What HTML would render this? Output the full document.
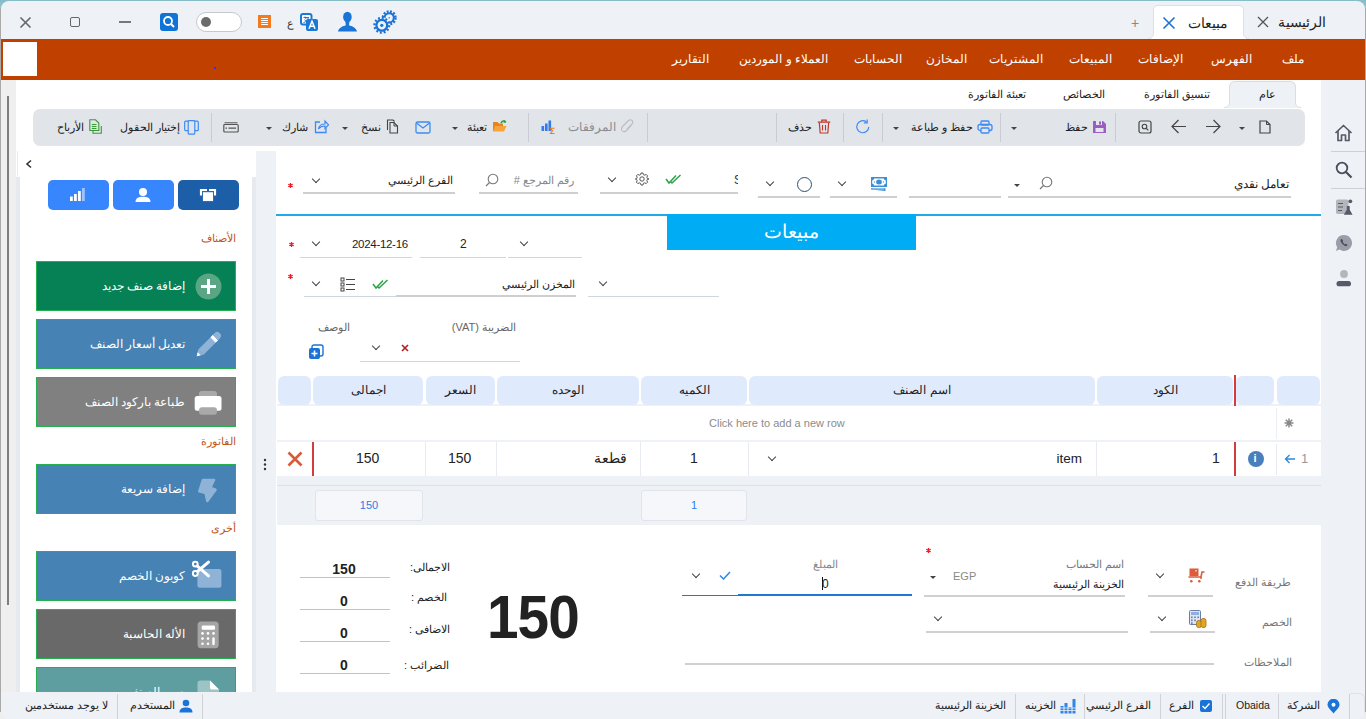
<!DOCTYPE html>
<html><head><meta charset="utf-8">
<style>
*{box-sizing:border-box;margin:0;padding:0}
html,body{width:1366px;height:719px;overflow:hidden;background:linear-gradient(#86bcc6 0,#9fd0da 20px,#eeeeee 21px);font-family:"Liberation Sans",sans-serif;font-size:12px;color:#222}
.a{position:absolute}
#win{position:absolute;left:1px;top:1px;width:1364px;height:718px;background:#eef1f6;border-radius:8px;overflow:hidden}
.t{position:absolute;white-space:nowrap;direction:rtl;line-height:1}
.tl{position:absolute;white-space:nowrap;line-height:1}
.menu{color:#fff;font-size:12px;top:53px}
.sep{position:absolute;width:1px;background:#c9cdd3}
.ul{position:absolute;height:1px;background:#c8c8c8}
.chev{position:absolute;width:6px;height:6px;border-right:1.3px solid #444;border-bottom:1.3px solid #444;transform:rotate(45deg)}
.tri{position:absolute;width:0;height:0;border-left:3.5px solid transparent;border-right:3.5px solid transparent;border-top:3.5px solid #444;margin-left:0.5px;margin-top:0.5px}
.hd{position:absolute;top:376px;height:29px;background:#dfebfd;border-radius:6px;font-size:12px;color:#222;text-align:center;line-height:29px;direction:rtl}
.btn{position:absolute;left:36px;width:200px;height:50px;border:1px solid #25b04f;color:#fff;font-size:11.5px}
.btn .t{right:50px;top:19px;color:#fff}
.lbl{position:absolute;right:1130px;color:#c0561a;font-size:11px;direction:rtl}
.stt{position:absolute;top:700px;font-size:10.5px;color:#222;direction:rtl;white-space:nowrap;line-height:1}
.ssep{position:absolute;top:694px;width:1px;height:25px;background:#cfd3d8}
</style></head><body>
<div class="a" style="left:0;top:8px;width:1px;height:704px;background:#a9a9a9"></div>
<div class="a" style="left:1365px;top:8px;width:1px;height:704px;background:#a9a9a9"></div>
<div id="win">
<!-- ===== TITLE BAR (coords are page coords minus 1) ===== -->
<div class="a" style="left:-1px;top:-1px;width:1366px;height:719px">
  <!-- window controls -->
  <svg class="a" style="left:19px;top:16px" width="13" height="13" viewBox="0 0 13 13"><path d="M1.5 1.5L11.5 11.5M11.5 1.5L1.5 11.5" stroke="#666" stroke-width="1.6"/></svg>
  <div class="a" style="left:70px;top:17px;width:10px;height:10px;border:1.4px solid #666;border-radius:2px"></div>
  <div class="a" style="left:119px;top:21px;width:12px;height:1.5px;background:#777"></div>
  <div class="a" style="left:160px;top:13px;width:18px;height:18px;background:#0f73d8;border-radius:3px"></div>
  <svg class="a" style="left:160px;top:13px" width="18" height="18" viewBox="0 0 18 18"><circle cx="8" cy="8" r="4" stroke="#fff" stroke-width="1.8" fill="none"/><path d="M11 11L14 14" stroke="#fff" stroke-width="2"/></svg>
  <div class="a" style="left:196px;top:12px;width:46px;height:20px;background:#fff;border:1px solid #c5c8cc;border-radius:10px"></div>
  <div class="a" style="left:201px;top:17px;width:10px;height:10px;background:#6b6b6b;border-radius:50%"></div>
  <div class="a" style="left:258px;top:15px;width:13px;height:13px;background:#f47a1f"></div>
  <svg class="a" style="left:258px;top:15px" width="13" height="13"><path d="M3 3.5H10M3 5.5H10M3 7.5H10M3 9.5H10" stroke="#fff" stroke-width="1"/></svg>
  <div class="t" style="left:287px;top:18px;font-size:11px;color:#333">ع</div>
  <svg class="a" style="left:300px;top:13px" width="19" height="19" viewBox="0 0 19 19"><rect x="1" y="1" width="10.5" height="10.5" rx="2" fill="#fff" stroke="#1a78d8" stroke-width="2"/><path d="M3.5 4.5H9M5 3.5L6 6M8.5 4.5C7.5 7.5 6 9 3.5 9.5M4.5 6.5C5.5 8 7 9 9 9.5" fill="none" stroke="#1a78d8" stroke-width="1"/><rect x="6" y="6" width="12" height="12" rx="2" fill="#1a78d8"/><path d="M9 15.8L12 8.3L15 15.8M10.1 13.2H13.9" fill="none" stroke="#fff" stroke-width="1.5"/></svg>
  <svg class="a" style="left:337px;top:11px" width="21" height="21" viewBox="0 0 21 21"><ellipse cx="10.4" cy="6" rx="4.3" ry="5.3" fill="#1a73d6"/><path d="M8.3 10H12.5L12 14.2C15 15.2 19 16.2 20 20.5H1C2 16.2 6 15.2 8.8 14.2Z" fill="#1a73d6"/></svg>
  <svg class="a" style="left:372px;top:9px" width="26" height="26" viewBox="0 0 26 26">
    <g fill="none" stroke="#1a73d6"><circle cx="17.2" cy="8.8" r="6.3" stroke-width="2.4" stroke-dasharray="1.9 1.4"/><circle cx="17.2" cy="8.8" r="4.6" stroke-width="2"/></g>
    <circle cx="9.8" cy="16.3" r="8" fill="#eef1f6"/>
    <g fill="none" stroke="#1a73d6"><circle cx="9.8" cy="16.3" r="7.3" stroke-width="2.4" stroke-dasharray="1.9 1.9"/><circle cx="9.8" cy="16.3" r="5.4" stroke-width="2.3"/></g>
    <circle cx="9.8" cy="16.3" r="1.6" fill="#1a73d6"/><rect x="16.5" y="8" width="1.5" height="1.5" fill="#5a9ae6"/>
  </svg>
  <!-- tabs -->
  <div class="t" style="left:1131px;top:16px;font-size:14px;color:#888">+</div>
  <div class="a" style="left:1153px;top:5px;width:91px;height:34px;background:#fff;border:1px solid #dde0e4;border-bottom:none;border-radius:5px 5px 0 0"></div>
  <svg class="a" style="left:1148px;top:33px" width="101" height="6" viewBox="0 0 101 6"><path d="M0 6C3 6 5.5 4 5.5 0H95.5C95.5 4 98 6 101 6Z" fill="#fff"/><path d="M0 5.5C3 5.5 5.5 4 5.5 0M95.5 0C95.5 4 98 5.5 101 5.5" fill="none" stroke="#dde0e4" stroke-width="1"/></svg>
  <svg class="a" style="left:1162px;top:16px" width="14" height="14"><path d="M1.5 1.5L12.5 12.5M12.5 1.5L1.5 12.5" stroke="#1a73d6" stroke-width="1.6"/></svg>
  <div class="t" style="right:138px;top:16px;font-size:14px;color:#222">مبيعات</div>
  <svg class="a" style="left:1257px;top:16px" width="12" height="12"><path d="M1 1L11 11M11 1L1 11" stroke="#555" stroke-width="1.3"/></svg>
  <div class="t" style="right:40px;top:16px;font-size:13.5px;color:#222">الرئيسية</div>

  <!-- menu bar -->
  <div class="a" style="left:0;top:39px;width:1366px;height:41px;background:#c04000"></div>
  <div class="a" style="left:3px;top:42px;width:34px;height:34px;background:#fff"></div>
  <div class="a" style="left:214px;top:67px;width:2px;height:2px;background:#2a3fd0"></div>
  <div class="t menu" style="right:62px">ملف</div>
  <div class="t menu" style="right:114px">الفهرس</div>
  <div class="t menu" style="right:183px">الإضافات</div>
  <div class="t menu" style="right:254px">المبيعات</div>
  <div class="t menu" style="right:323px">المشتريات</div>
  <div class="t menu" style="right:399px">المخازن</div>
  <div class="t menu" style="right:464px">الحسابات</div>
  <div class="t menu" style="right:538px">العملاء و الموردين</div>
  <div class="t menu" style="right:657px">التقارير</div>


  <!-- content bg -->
  <div class="a" style="left:0;top:80px;width:16px;height:612px;background:#efefef"></div>
  <div class="a" style="left:7px;top:96px;width:2px;height:509px;background:#7d7d7d"></div>
  <div class="a" style="left:16px;top:80px;width:1305px;height:612px;background:#fff"></div>
  <div class="a" style="left:1321px;top:115px;width:44px;height:577px;background:#eef1f6"></div>
  
  <!-- sub tabs -->
  <div class="a" style="left:1229px;top:81px;width:67px;height:27px;background:#eef1f6;border:1px solid #d9dde3;border-bottom:none;border-radius:6px 6px 0 0"></div>
  <svg class="a" style="left:1224px;top:102px" width="77" height="6" viewBox="0 0 77 6"><path d="M0 6C3 6 5.5 4 5.5 0H71.5C71.5 4 74 6 77 6Z" fill="#eef1f6"/><path d="M0 5.5C3 5.5 5.5 4 5.5 0M71.5 0C71.5 4 74 5.5 77 5.5" fill="none" stroke="#d9dde3" stroke-width="1"/></svg>
  <div class="t" style="right:90px;top:89px;font-size:11px">عام</div>
  <div class="t" style="right:156px;top:89px;font-size:11px">تنسيق الفاتورة</div>
  <div class="t" style="right:261px;top:89px;font-size:11px">الخصائص</div>
  <div class="t" style="right:340px;top:89px;font-size:11px">تعبئة الفاتورة</div>

  <!-- toolbar -->
  <div class="a" style="left:33px;top:109px;width:1272px;height:37px;background:#e1e4e9;border-radius:7px"></div>
  <div class="sep" style="left:211px;top:113px;height:29px"></div>
  <div class="sep" style="left:528px;top:113px;height:29px"></div>
  <div class="sep" style="left:647px;top:113px;height:29px"></div>
  <div class="sep" style="left:776px;top:113px;height:29px"></div>
  <div class="sep" style="left:843px;top:113px;height:29px"></div>
  <div class="sep" style="left:882px;top:113px;height:29px"></div>
  <div class="sep" style="left:1000px;top:113px;height:29px"></div>
  <div class="sep" style="left:1115px;top:113px;height:29px"></div>


  <!-- toolbar items -->
  <svg class="a" style="left:1259px;top:120px" width="12" height="14" viewBox="0 0 12 14"><path d="M1 1H7.5L11 4.5V13H1Z" fill="none" stroke="#444" stroke-width="1.2"/><path d="M7.5 1V4.5H11" fill="none" stroke="#444" stroke-width="1"/></svg>
  <div class="tri" style="left:1238px;top:126px"></div>
  <svg class="a" style="left:1205px;top:119px" width="16" height="15" viewBox="0 0 16 15"><path d="M1 7.5H15M8.5 1L15 7.5L8.5 14" fill="none" stroke="#444" stroke-width="1.2"/></svg>
  <svg class="a" style="left:1171px;top:119px" width="16" height="15" viewBox="0 0 16 15"><path d="M15 7.5H1M7.5 1L1 7.5L7.5 14" fill="none" stroke="#444" stroke-width="1.2"/></svg>
  <svg class="a" style="left:1138px;top:120px" width="14" height="14" viewBox="0 0 14 14"><rect x="1" y="1" width="12" height="12" rx="2" fill="none" stroke="#444" stroke-width="1.2"/><circle cx="6.5" cy="6.5" r="2.3" fill="none" stroke="#444" stroke-width="1.1"/><path d="M8.3 8.3L10.3 10.3" stroke="#444" stroke-width="1.2"/></svg>
  <svg class="a" style="left:1092px;top:120px" width="15" height="14" viewBox="0 0 15 14"><path d="M1 1H11L14 4V13H1Z" fill="#9b5cc4"/><rect x="4" y="1" width="6" height="4" fill="#e3e6ea"/><rect x="7" y="1.5" width="2" height="3" fill="#9b5cc4"/><rect x="3.5" y="8" width="8" height="4" fill="#e3e6ea"/></svg>
  <div class="t" style="right:278px;top:122px;font-size:11px">حفظ</div>
  <div class="tri" style="left:1010px;top:126px"></div>
  <svg class="a" style="left:977px;top:120px" width="16" height="14" viewBox="0 0 16 14"><rect x="4" y="1" width="8" height="4" rx="1" fill="none" stroke="#3d8bf2" stroke-width="1.3"/><rect x="1" y="4.5" width="14" height="6" rx="2" fill="none" stroke="#3d8bf2" stroke-width="1.3"/><rect x="4" y="8" width="8" height="5" rx="1" fill="#e3e6ea" stroke="#3d8bf2" stroke-width="1.3"/></svg>
  <div class="t" style="right:393px;top:122px;font-size:11px">حفظ و طباعة</div>
  <div class="tri" style="left:892px;top:126px"></div>
  <svg class="a" style="left:855px;top:119px" width="16" height="15" viewBox="0 0 16 15"><path d="M13.8 8A6 6 0 1 1 11.5 3" fill="none" stroke="#3d8bf2" stroke-width="1.2"/><path d="M12.2 0.5V3.8H8.8" fill="none" stroke="#3d8bf2" stroke-width="1.2"/></svg>
  <svg class="a" style="left:817px;top:119px" width="14" height="15" viewBox="0 0 14 15"><path d="M0.8 3.2H13.2M4.8 3V1.2H9.2V3" fill="none" stroke="#c0392b" stroke-width="1.2"/><path d="M2.3 3.5L3.2 14H10.8L11.7 3.5" fill="none" stroke="#c0392b" stroke-width="1.2"/><path d="M5.5 6V11.5M8.5 6V11.5" stroke="#c0392b" stroke-width="1.1"/></svg>
  <div class="t" style="right:554px;top:122px;font-size:11px">حذف</div>
  <svg class="a" style="left:621px;top:119px" width="13" height="15" viewBox="0 0 13 15"><path d="M10.5 6L5.5 11.5C4 13 1.8 13 1 11.5C0 10 0.5 8.5 2 7L7.5 1.5C8.5 0.5 10.2 0.5 11 1.5C12 2.5 11.8 4 11 5L5.8 10.3" fill="none" stroke="#b9bcc1" stroke-width="1.1"/></svg>
  <div class="t" style="right:750px;top:121px;font-size:12px;color:#8a8d92">المرفقات</div>
  <svg class="a" style="left:541px;top:120px" width="14" height="14" viewBox="0 0 14 14"><rect x="0.5" y="6" width="2.6" height="5" fill="#2f7cf0"/><rect x="4" y="3.5" width="2.6" height="7.5" fill="#2f7cf0"/><rect x="7.5" y="0.5" width="2.6" height="10.5" fill="#2f7cf0"/><path d="M13.5 8.2H9.5L11.5 10.8L9.5 13.5H13.5" fill="none" stroke="#f07a20" stroke-width="1.1"/></svg>
  <svg class="a" style="left:492px;top:119px" width="15" height="14" viewBox="0 0 15 14"><path d="M1 3H5.5L7 4.5H11V12H1Z" fill="#e8841d"/><path d="M3 7H14.5L12 12.5H1Z" fill="#f8a23b"/><path d="M9 4C10 1.5 12.5 1.5 13.8 3" fill="none" stroke="#2e9e3e" stroke-width="1.5"/><path d="M12 0.8L14.3 3.2L11.6 4.1" fill="#2e9e3e"/></svg>
  <div class="t" style="right:879px;top:122px;font-size:11px">تعبئة</div>
  <div class="tri" style="left:451px;top:126px"></div>
  <svg class="a" style="left:415px;top:121px" width="16" height="13" viewBox="0 0 16 13"><rect x="1" y="1" width="14" height="11" rx="1.5" fill="none" stroke="#3d8bf2" stroke-width="1.3"/><path d="M1.5 2L8 7L14.5 2" fill="none" stroke="#3d8bf2" stroke-width="1.3"/></svg>
  <svg class="a" style="left:386px;top:119px" width="13" height="15" viewBox="0 0 13 15"><path d="M4 3.5H8L11.5 7V14H4Z" fill="#e3e6ea" stroke="#444" stroke-width="1.1"/><path d="M1.5 11V1H7L8.5 2.5" fill="none" stroke="#444" stroke-width="1.1"/><path d="M8 3.5V7H11.5" fill="none" stroke="#444" stroke-width="1"/></svg>
  <div class="t" style="right:985px;top:122px;font-size:11px">نسخ</div>
  <div class="tri" style="left:341px;top:126px"></div>
  <svg class="a" style="left:314px;top:119px" width="15" height="15" viewBox="0 0 15 15"><path d="M6 3H1.5V13.5H12V9" fill="none" stroke="#3d8bf2" stroke-width="1.3"/><path d="M4.5 10C5 6.5 7.5 5 11 5V2L14.5 5.8L11 9.5V7C8 7 6 8 4.5 10Z" fill="none" stroke="#3d8bf2" stroke-width="1.2"/></svg>
  <div class="t" style="right:1058px;top:122px;font-size:11px">شارك</div>
  <div class="tri" style="left:265px;top:126px"></div>
  <svg class="a" style="left:223px;top:122px" width="16" height="11" viewBox="0 0 16 11"><path d="M1.5 0.8H14.5" stroke="#555" stroke-width="1"/><rect x="0.8" y="2.5" width="14.4" height="7.5" rx="1" fill="none" stroke="#555" stroke-width="1.2"/><path d="M2.5 6.2H4M5.5 6.2H13" stroke="#555" stroke-width="1.2"/></svg>
  <svg class="a" style="left:184px;top:120px" width="15" height="15" viewBox="0 0 15 15"><rect x="0.7" y="1.2" width="13.6" height="9.5" rx="1" fill="none" stroke="#3d8bf2" stroke-width="1.2"/><rect x="4.2" y="0.6" width="6.6" height="13.6" rx="1" fill="#e1e4e9" stroke="#3d8bf2" stroke-width="1.2"/></svg>
  <div class="t" style="right:1186px;top:122px;font-size:11px">إختيار الحقول</div>
  <svg class="a" style="left:89px;top:119px" width="13" height="15" viewBox="0 0 13 15"><path d="M4 4V14.3H12.3V7" fill="none" stroke="#3a9a3a" stroke-width="1.1"/><path d="M0.8 11.5V0.8H6.5L9.8 4V11.5Z" fill="#e1e4e9" stroke="#3a9a3a" stroke-width="1.1"/><path d="M2.8 5.5H7.5M2.8 7.5H7.5M2.8 9.5H7.5" stroke="#3a9a3a" stroke-width="1"/></svg>
  <div class="t" style="right:1282px;top:122px;font-size:11px">الأرباح</div>

  <!-- right sidebar icons -->
  <svg class="a" style="left:1334px;top:124px" width="19" height="18" viewBox="0 0 19 18"><path d="M1.5 9L9.5 1.5L17.5 9M4 7V16.5H7.5V11H11.5V16.5H15V7" fill="none" stroke="#555a66" stroke-width="1.7" stroke-linejoin="round"/></svg>
  <div class="a" style="left:1331px;top:151px;width:34px;height:1px;background:#cdd1d7"></div>
  <svg class="a" style="left:1335px;top:161px" width="18" height="18" viewBox="0 0 18 18"><circle cx="7" cy="7" r="5.3" fill="none" stroke="#4a4e5a" stroke-width="1.8"/><path d="M11 11L16.5 16.5" stroke="#4a4e5a" stroke-width="2.2"/></svg>
  <div class="a" style="left:1331px;top:188px;width:34px;height:1px;background:#cdd1d7"></div>
  <svg class="a" style="left:1335px;top:199px" width="18" height="17" viewBox="0 0 18 17"><rect x="1" y="0.6" width="12.5" height="14.4" rx="1.8" fill="#b4b6bd"/><path d="M3 4.5H8M3 8H8M3 11.5H7" stroke="#555a66" stroke-width="1.2"/><path d="M8.8 15.8L11.8 10.8V7H14.7V10.8L17.6 15.8Z" fill="#555a66"/><circle cx="15.3" cy="2.3" r="1.9" fill="#555a66"/></svg>
  <svg class="a" style="left:1335px;top:234px" width="18" height="18" viewBox="0 0 18 18"><path d="M9 1A8 8 0 1 1 4.5 15.6L1 17L2.2 13.3A8 8 0 0 1 9 1Z" fill="#9a9ea8"/><path d="M6 5.2C5.2 5.8 5.3 7.3 6.8 9.3C8.5 11.4 10.3 12.5 11.6 12.1C12.2 11.9 12.6 11.2 12.3 10.8L11 9.8C10.6 9.6 10.2 10.3 9.9 10.3C9.2 10 7.9 8.6 7.7 8C7.7 7.7 8.3 7.3 8.2 6.9L7.3 5.5C7 5.1 6.4 5 6 5.2Z" fill="#4a4e5a"/></svg>
  <svg class="a" style="left:1334px;top:268px" width="20" height="20" viewBox="0 0 20 20"><circle cx="10" cy="6" r="3.9" fill="#b4b6bd"/><rect x="2.5" y="13" width="14.5" height="5.3" rx="2.6" fill="#555a66"/></svg>

  <!-- left panel -->
  <div class="a" style="left:16px;top:177px;width:4px;height:515px;background:#e6e9ee"></div>
  <div class="a" style="left:252px;top:177px;width:4px;height:515px;background:#e6e9ee"></div>
  <div class="a" style="left:256px;top:151px;width:20px;height:541px;background:#eef1f6"></div>
  <div class="a" style="left:17px;top:151px;width:1px;height:26px;background:#e3ecfa"></div>
  <svg class="a" style="left:25px;top:159px" width="8" height="10" viewBox="0 0 8 10"><path d="M6 1.5L2 5L6 8.5" fill="none" stroke="#333" stroke-width="1.6"/></svg>
  <div class="a" style="left:48px;top:180px;width:61px;height:30px;background:#3786fe;border-radius:5px"></div>
  <div class="a" style="left:113px;top:180px;width:61px;height:30px;background:#3786fe;border-radius:5px"></div>
  <div class="a" style="left:178px;top:180px;width:61px;height:30px;background:#1d5ea8;border-radius:5px"></div>
  <svg class="a" style="left:69px;top:187px" width="16" height="16" viewBox="0 0 16 16"><rect x="1" y="9.5" width="2.8" height="4.5" fill="#fff"/><rect x="5" y="7" width="2.8" height="7" fill="#fff"/><rect x="9" y="4" width="2.8" height="10" fill="#fff"/><rect x="13" y="1" width="2.8" height="13" fill="#9fc3fb"/></svg>
  <svg class="a" style="left:134px;top:187px" width="18" height="17" viewBox="0 0 18 17"><circle cx="9" cy="5" r="4" fill="#fff"/><path d="M1.5 15C1.5 11 5 9.8 9 9.8C13 9.8 16.5 11 16.5 15Z" fill="#fff"/></svg>
  <svg class="a" style="left:199px;top:188px" width="18" height="14" viewBox="0 0 18 14"><path d="M2 7.5V2H8M10 2H16V7.5" fill="none" stroke="#fff" stroke-width="2.2"/><rect x="3.6" y="3.8" width="10.8" height="9.6" fill="#fff" stroke="#1d5ea8" stroke-width="0.8"/></svg>

  <div class="t lbl" style="top:233px">الأصناف</div>
  <div class="btn" style="top:261px;background:#058155"><div class="t">إضافة صنف جديد</div>
    <svg class="a" style="left:158px;top:11px" width="27" height="27" viewBox="0 0 27 27"><circle cx="13.5" cy="13.5" r="13" fill="#5aa583"/><path d="M13.5 6V21M6 13.5H21" stroke="#fff" stroke-width="3"/></svg></div>
  <div class="btn" style="top:319px;background:#4682b4"><div class="t">تعديل أسعار الصنف</div>
    <svg class="a" style="left:157px;top:11px" width="28" height="28" viewBox="0 0 28 28"><g transform="rotate(-45 14 14)"><path d="M-2 14L4 10.25V17.75Z" fill="#8fb3d6"/><path d="M-2 14L1.5 11.9V16.1Z" fill="#fff"/><rect x="4" y="10.25" width="17" height="7.5" fill="#8fb3d6"/><rect x="21" y="10.25" width="3.6" height="7.5" fill="#fff"/><path d="M24.6 10.25H27A3.75 3.75 0 0 1 27 17.75H24.6Z" fill="#8fb3d6"/></g></svg></div>
  <div class="btn" style="top:377px;background:#808080"><div class="t">طباعة باركود الصنف</div>
    <svg class="a" style="left:157px;top:12px" width="28" height="26" viewBox="0 0 28 26"><rect x="4.9" y="0.9" width="18.1" height="8" rx="3" fill="#a9a9a9"/><rect x="0.7" y="6" width="26.8" height="14.7" rx="2.5" fill="#fff"/><rect x="5" y="17.2" width="18" height="7.5" rx="3" fill="#a9a9a9"/></svg></div>
  <div class="t lbl" style="top:436px">الفاتورة</div>
  <div class="btn" style="top:464px;background:#4682b4"><div class="t">إضافة سريعة</div>
    <svg class="a" style="left:158px;top:10px" width="26" height="32" viewBox="0 0 26 32"><path d="M8 5H19L15.3 12.8L20.5 14.8L12.3 26L10.6 18L4.3 16.3Z" fill="#8fb3d6" stroke="#8fb3d6" stroke-width="2.6" stroke-linejoin="round"/></svg></div>
  <div class="t lbl" style="top:523px">أخرى</div>
  <div class="btn" style="top:551px;background:#4682b4"><div class="t">كوبون الخصم</div>
    <svg class="a" style="left:153px;top:8px" width="34" height="30" viewBox="0 0 34 30"><rect x="7.4" y="9" width="24" height="18.8" rx="2.2" fill="#8fb3d6"/><path d="M6.8 5.6L18.5 15.8M6.8 12L18.5 2.2" stroke="#fff" stroke-width="3" stroke-linecap="round"/><circle cx="5.3" cy="4.1" r="2.4" fill="#4682b4" stroke="#fff" stroke-width="2"/><circle cx="5.3" cy="13.5" r="2.4" fill="#4682b4" stroke="#fff" stroke-width="2"/></svg></div>
  <div class="btn" style="top:609px;background:#696969"><div class="t">الأله الحاسبة</div>
    <svg class="a" style="left:160px;top:11px" width="23" height="28" viewBox="0 0 23 28"><rect x="0.6" y="0.4" width="21.1" height="26.8" rx="3.5" fill="#a5a5a5"/><rect x="4.7" y="4.6" width="13.3" height="4.2" rx="1.2" fill="#fff"/><g fill="#fff"><circle cx="5.5" cy="12.4" r="1.3"/><circle cx="11" cy="12.4" r="1.3"/><circle cx="16.5" cy="12.4" r="1.3"/><circle cx="5.5" cy="17.6" r="1.3"/><circle cx="11" cy="17.6" r="1.3"/><circle cx="5.5" cy="22.8" r="1.3"/><circle cx="11" cy="22.8" r="1.3"/><rect x="15.3" y="16.2" width="2.4" height="8" rx="1.2"/></g></svg></div>
  <div class="btn" style="top:667px;background:#5f9ea0;height:50px"><div class="t">صور الصنف</div>
    <svg class="a" style="left:160px;top:12px" width="23" height="30" viewBox="0 0 23 30"><path d="M3.5 0.5H13L22 9.5V30H0.5V3.5A3 3 0 0 1 3.5 0.5Z" fill="#9cc4c5"/><path d="M13 0.5L22 9.5H14.5A1.5 1.5 0 0 1 13 8Z" fill="#fff"/></svg></div>
  <svg class="a" style="left:263px;top:458px" width="4" height="13" viewBox="0 0 4 13"><circle cx="2" cy="2" r="1.2" fill="#333"/><circle cx="2" cy="6.5" r="1.2" fill="#333"/><circle cx="2" cy="11" r="1.2" fill="#333"/></svg>

  <!-- ===== MAIN FORM ===== -->
  <!-- row1 -->
  <svg class="a" style="left:287px;top:182px" width="7" height="7" viewBox="0 0 7 7"><path d="M3.5 1V6M1.3 2.2L5.7 4.8M5.7 2.2L1.3 4.8" stroke="#ee1c25" stroke-width="1.3"/></svg>
  <div class="chev" style="left:313px;top:176px"></div>
  <div class="ul" style="left:303px;top:192px;width:152px;height:2px;background:#cfcfcf"></div>
  <div class="t" style="right:913px;top:175px;font-size:11px">الفرع الرئيسي</div>
  <svg class="a" style="left:485px;top:173px" width="14" height="14" viewBox="0 0 14 14"><circle cx="8" cy="6" r="4.8" fill="none" stroke="#777" stroke-width="1.1"/><path d="M4.5 9.5L1 13" stroke="#777" stroke-width="1.2"/></svg>
  <div class="ul" style="left:479px;top:192px;width:99px;height:2px;background:#cfcfcf"></div>
  <div class="t" style="right:792px;top:175px;font-size:11px;color:#888">رقم المرجع #</div>
  <div class="chev" style="left:609px;top:175px"></div>
  <svg class="a" style="left:635px;top:172px" width="14" height="14" viewBox="0 0 14 14"><g fill="none" stroke="#555" stroke-width="1"><circle cx="7" cy="7" r="2.2"/><path d="M6 1H8L8.4 2.6L9.8 3.2L11.2 2.4L12.6 3.8L11.8 5.2L12.4 6.6L14 7V7L12.4 7.4L11.8 8.8L12.6 10.2L11.2 11.6L9.8 10.8L8.4 11.4L8 13H6L5.6 11.4L4.2 10.8L2.8 11.6L1.4 10.2L2.2 8.8L1.6 7.4L0.3 7L1.6 6.6L2.2 5.2L1.4 3.8L2.8 2.4L4.2 3.2L5.6 2.6Z"/></g></svg>
  <svg class="a" style="left:665px;top:174px" width="17" height="11" viewBox="0 0 17 11"><path d="M1 5L4 9L11 1.5M5.5 7.5L7 9L15.5 1" fill="none" stroke="#2ea34a" stroke-width="1.5"/></svg>
  <div class="ul" style="left:600px;top:192px;width:138px;height:2px;background:#cfcfcf"></div>
  <div class="tl" style="left:734px;top:174px;font-size:12px;color:#333;width:4px;overflow:hidden">S</div>
  <div class="chev" style="left:767px;top:179px"></div>
  <div class="a" style="left:796.5px;top:176.5px;width:15px;height:15px;border:1.5px solid #2d4e73;border-radius:50%"></div>
  <div class="ul" style="left:758px;top:196px;width:62px;height:2px;background:#cfcfcf"></div>
  <div class="chev" style="left:839px;top:179px"></div>
  <svg class="a" style="left:870px;top:176px" width="18" height="16" viewBox="0 0 18 16"><rect x="1" y="1" width="16" height="10" fill="#3b8fd6"/><path d="M4 2.5H14C14 3.8 14.8 4.3 15.8 4.3V7.7C14.8 7.7 14 8.3 14 9.5H4C4 8.3 3.2 7.7 2.2 7.7V4.3C3.2 4.3 4 3.8 4 2.5Z" fill="#fff"/><ellipse cx="9" cy="6" rx="2.9" ry="2.5" fill="#3b8fd6"/><path d="M4.5 5.3L5.3 6L4.5 6.7L3.7 6Z M13.5 5.3L14.3 6L13.5 6.7L12.7 6Z" fill="#3b8fd6"/><path d="M1 12.2H15.5V15L1 13.4Z" fill="#3b8fd6"/><path d="M3 13H14" stroke="#d6e8f7" stroke-width="0.6"/></svg>
  <div class="ul" style="left:830px;top:196px;width:67px;height:2px;background:#cfcfcf"></div>
  <div class="ul" style="left:909px;top:196px;width:92px;height:2px;background:#cfcfcf"></div>
  <div class="tri" style="left:1013px;top:183px"></div>
  <svg class="a" style="left:1039px;top:176px" width="14" height="14" viewBox="0 0 14 14"><circle cx="8" cy="6" r="4.8" fill="none" stroke="#777" stroke-width="1.1"/><path d="M4.5 9.5L1 13" stroke="#777" stroke-width="1.2"/></svg>
  <div class="ul" style="left:1008px;top:196px;width:283px;height:2px;background:#cfcfcf"></div>
  <div class="t" style="right:77px;top:179px;font-size:11.5px">تعامل نقدي</div>
  <!-- blue line + banner -->
  <div class="a" style="left:276px;top:214px;width:1045px;height:1.5px;background:#22a9e8"></div>
  <div class="a" style="left:667px;top:214px;width:249px;height:36px;background:#00adf5"></div>
  <div class="t" style="left:667px;width:248px;text-align:center;top:222px;font-size:19px;color:#fff">مبيعات</div>
  <!-- row2 -->
  <svg class="a" style="left:288px;top:241px" width="7" height="7" viewBox="0 0 7 7"><path d="M3.5 1V6M1.3 2.2L5.7 4.8M5.7 2.2L1.3 4.8" stroke="#ee1c25" stroke-width="1.3"/></svg>
  <div class="chev" style="left:313px;top:239px"></div>
  <div class="tl" style="left:352px;top:239px;font-size:11.5px;letter-spacing:-0.3px;color:#222">2024-12-16</div>
  <div class="ul" style="left:300px;top:257px;width:112px;background:#cfd6de"></div>
  <div class="tl" style="left:460px;top:238px;font-size:12px;color:#222">2</div>
  <div class="ul" style="left:420px;top:257px;width:86px;background:#cfd6de"></div>
  <div class="chev" style="left:521px;top:239px"></div>
  <div class="ul" style="left:508px;top:257px;width:74px;background:#cfd6de"></div>
  <!-- row3 -->
  <svg class="a" style="left:287px;top:273px" width="7" height="7" viewBox="0 0 7 7"><path d="M3.5 1V6M1.3 2.2L5.7 4.8M5.7 2.2L1.3 4.8" stroke="#ee1c25" stroke-width="1.3"/></svg>
  <div class="chev" style="left:313px;top:279px"></div>
  <svg class="a" style="left:340px;top:277px" width="16" height="15" viewBox="0 0 16 15"><g fill="none" stroke="#444" stroke-width="1"><rect x="1" y="1" width="3" height="3"/><rect x="1" y="6" width="3" height="3"/><rect x="1" y="11" width="3" height="3"/><path d="M6 2.5H15M6 7.5H15M6 12.5H15"/></g></svg>
  <svg class="a" style="left:372px;top:279px" width="17" height="11" viewBox="0 0 17 11"><path d="M1 5L4 9L11 1.5M5.5 7.5L7 9L15.5 1" fill="none" stroke="#2ea34a" stroke-width="1.5"/></svg>
  <div class="ul" style="left:304px;top:296px;width:92px;background:#cfd6de"></div>
  <div class="ul" style="left:396px;top:295px;width:180px;height:2px;background:#cfcfcf"></div>
  <div class="t" style="right:791px;top:279px;font-size:11px">المخزن الرئيسي</div>
  <div class="chev" style="left:600px;top:279px"></div>
  <div class="ul" style="left:588px;top:296px;width:131px;background:#cfd6de"></div>
  <!-- VAT row -->
  <div class="t" style="right:850px;top:322px;font-size:11px;color:#666">الضريبة (VAT)</div>
  <div class="t" style="right:1016px;top:322px;font-size:11px;color:#666">الوصف</div>
  <svg class="a" style="left:308px;top:344px" width="16" height="16" viewBox="0 0 16 16"><rect x="4" y="1" width="11" height="11" rx="2" fill="none" stroke="#1a73d6" stroke-width="1.4"/><rect x="1" y="4" width="11" height="11" rx="2" fill="#1a73d6"/><path d="M6.5 6.5V12.5M3.5 9.5H9.5" stroke="#fff" stroke-width="1.6"/></svg>
  <div class="chev" style="left:373px;top:343px"></div>
  <svg class="a" style="left:401px;top:344px" width="8" height="8" viewBox="0 0 8 8"><path d="M1 1L7 7M7 1L1 7" stroke="#b02020" stroke-width="1.6"/></svg>
  <div class="ul" style="left:360px;top:361px;width:160px;background:#cfd6de"></div>

  <!-- ===== GRID ===== -->
  <div class="a" style="left:277px;top:376px;width:1044px;height:30px;background:#fff"></div>
  <div class="a" style="left:277px;top:404px;width:1044px;height:2px;background:#eef1f6"></div>
  <div class="hd" style="left:278px;width:33px"></div>
  <div class="hd" style="left:313px;width:110px">اجمالى</div>
  <div class="hd" style="left:426px;width:69px">السعر</div>
  <div class="hd" style="left:497px;width:142px">الوحده</div>
  <div class="hd" style="left:641px;width:106px">الكميه</div>
  <div class="hd" style="left:749px;width:346px">اسم الصنف</div>
  <div class="hd" style="left:1097px;width:136px">الكود</div>
  <div class="hd" style="left:1236px;width:38px"></div>
  <div class="hd" style="left:1277px;width:43px"></div>
  <div class="a" style="left:1234px;top:375px;width:2px;height:31px;background:#d23c3c"></div>
  <!-- new row -->
  <div class="tl" style="left:709px;top:418px;font-size:11px;color:#8c8c8c">Click here to add a new row</div>
  <div class="a" style="left:1276px;top:408px;width:1px;height:31px;background:#eceff3"></div>
  <svg class="a" style="left:1284px;top:418px" width="10" height="10" viewBox="0 0 10 10"><path d="M5 0.5V9.5M0.5 5H9.5M1.8 1.8L8.2 8.2M8.2 1.8L1.8 8.2" stroke="#888" stroke-width="1.5"/></svg>
  <div class="a" style="left:277px;top:440px;width:1044px;height:2px;background:#eef1f6"></div>
  <!-- data row -->
  <div class="a" style="left:277px;top:476px;width:1044px;height:10px;background:#eef1f6"></div>
  <div class="a" style="left:277px;top:485px;width:1044px;height:1px;background:#dde1e6"></div>
  <div class="a" style="left:425px;top:442px;width:1px;height:34px;background:#e8ebef"></div>
  <div class="a" style="left:496px;top:442px;width:1px;height:34px;background:#e8ebef"></div>
  <div class="a" style="left:640px;top:442px;width:1px;height:34px;background:#e8ebef"></div>
  <div class="a" style="left:748px;top:442px;width:1px;height:34px;background:#e8ebef"></div>
  <div class="a" style="left:1096px;top:442px;width:1px;height:34px;background:#e8ebef"></div>
  <div class="a" style="left:1276px;top:444px;width:1px;height:31px;background:#e8ebef"></div>
  <div class="a" style="left:312px;top:442px;width:2px;height:34px;background:#d23c3c"></div>
  <div class="a" style="left:1234px;top:442px;width:2px;height:34px;background:#d23c3c"></div>
  <svg class="a" style="left:287px;top:451px" width="16" height="16" viewBox="0 0 16 16"><path d="M1.5 1.5L14.5 14.5M14.5 1.5L1.5 14.5" stroke="#d95a36" stroke-width="2.6"/></svg>
  <div class="tl" style="left:356px;top:451px;font-size:14px;color:#222">150</div>
  <div class="tl" style="left:448px;top:451px;font-size:14px;color:#222">150</div>
  <div class="t" style="right:739px;top:451px;font-size:14px;color:#222">قطعة</div>
  <div class="tl" style="left:690px;top:451px;font-size:14px;color:#222">1</div>
  <div class="chev" style="left:769px;top:454px;width:6px;height:6px;border-width:1px"></div>
  <div class="tl" style="right:284px;top:452px;font-size:13.5px;color:#222">item</div>
  <div class="tl" style="left:1212px;top:451px;font-size:14px;color:#222">1</div>
  <div class="a" style="left:1248px;top:451px;width:16px;height:16px;border-radius:50%;background:#4a7fbd"></div>
  <div class="tl" style="left:1253.5px;top:453px;font-size:11px;color:#fff;font-weight:bold">i</div>
  <svg class="a" style="left:1284px;top:454px" width="12" height="10" viewBox="0 0 12 10"><path d="M11 5H1.5M5.5 1L1.5 5L5.5 9" fill="none" stroke="#2f86d6" stroke-width="1.3"/></svg>
  <div class="tl" style="left:1301px;top:452px;font-size:13px;color:#999">1</div>
  <!-- footer -->
  <div class="a" style="left:277px;top:486px;width:1044px;height:39px;background:#eef1f6"></div>
  <div class="a" style="left:315px;top:490px;width:108px;height:31px;background:#f5f7fa;border:1px solid #e1e5ea;border-radius:3px;color:#2f7be8;font-size:11px;text-align:center;line-height:29px">150</div>
  <div class="a" style="left:641px;top:490px;width:106px;height:31px;background:#f5f7fa;border:1px solid #e1e5ea;border-radius:3px;color:#2f7be8;font-size:11px;text-align:center;line-height:29px">1</div>

  <!-- ===== BOTTOM ===== -->
  <div class="tl" style="left:298px;top:562px;width:92px;text-align:center;font-size:14px;font-weight:bold;color:#222">150</div>
  <div class="ul" style="left:300px;top:577px;width:90px;background:#b9c4d0"></div>
  <div class="tl" style="left:298px;top:594px;width:92px;text-align:center;font-size:14px;font-weight:bold;color:#222">0</div>
  <div class="ul" style="left:300px;top:609px;width:90px;background:#b9c4d0"></div>
  <div class="tl" style="left:298px;top:626px;width:92px;text-align:center;font-size:14px;font-weight:bold;color:#222">0</div>
  <div class="ul" style="left:300px;top:641px;width:90px;background:#b9c4d0"></div>
  <div class="tl" style="left:298px;top:658px;width:92px;text-align:center;font-size:14px;font-weight:bold;color:#222">0</div>
  <div class="ul" style="left:300px;top:673px;width:90px;background:#b9c4d0"></div>
  <div class="t" style="right:916px;top:562px;font-size:11px;color:#222">الاجمالى:</div>
  <div class="t" style="right:919px;top:592px;font-size:11px;color:#222">الخصم :</div>
  <div class="t" style="right:916px;top:624px;font-size:11px;color:#222">الاضافى :</div>
  <div class="t" style="right:917px;top:660px;font-size:11px;color:#222">الضرائب :</div>
  <div class="tl" style="left:487px;top:587px;font-size:61px;font-weight:bold;color:#222;letter-spacing:-1px;transform:scaleX(0.93);transform-origin:0 0">150</div>

  <!-- payment -->
  <div class="t" style="right:75px;top:577px;font-size:11px;color:#777">طريقة الدفع</div>
  <svg class="a" style="left:1188px;top:567px" width="17" height="17" viewBox="0 0 17 17"><rect x="1.5" y="1.5" width="9" height="7.5" fill="#dd5a3a"/><rect x="7" y="3" width="2" height="1.5" fill="#f3b9a8"/><path d="M0.5 10H13L14 5H16.5" fill="none" stroke="#dd5a3a" stroke-width="1.6"/><path d="M13 10V12" stroke="#dd5a3a" stroke-width="1.4"/><circle cx="3.3" cy="14.3" r="1.3" fill="#dd5a3a"/><circle cx="11.3" cy="14.3" r="1.3" fill="#dd5a3a"/></svg>
  <div class="chev" style="left:1157px;top:571px"></div>
  <div class="ul" style="left:1148px;top:595px;width:65px;height:2px;background:#d0d0d0"></div>
  <div class="t" style="right:242px;top:559px;font-size:11px;color:#777">اسم الحساب</div>
  <div class="t" style="right:242px;top:579px;font-size:11px;color:#222">الخزينة الرئيسية</div>
  <div class="tl" style="left:953px;top:571px;font-size:11px;color:#888">EGP</div>
  <div class="tri" style="left:929px;top:575px"></div>
  <svg class="a" style="left:925px;top:547px" width="7" height="7" viewBox="0 0 7 7"><path d="M3.5 1V6M1.3 2.2L5.7 4.8M5.7 2.2L1.3 4.8" stroke="#ee1c25" stroke-width="1.3"/></svg>
  <div class="ul" style="left:924px;top:595px;width:201px;height:2px;background:#d0d0d0"></div>
  <div class="t" style="right:528px;top:559px;font-size:11px;color:#888">المبلغ</div>
  <div class="a" style="left:822px;top:577px;width:1px;height:13px;background:#111"></div>
  <div class="tl" style="left:822px;top:578px;font-size:12px;color:#222">0</div>
  <svg class="a" style="left:719px;top:571px" width="12" height="9" viewBox="0 0 12 9"><path d="M1 4.5L4.5 8L11 1" fill="none" stroke="#2f86e8" stroke-width="1.5"/></svg>
  <div class="chev" style="left:693px;top:571px"></div>
  <div class="a" style="left:682px;top:595px;width:56px;height:1px;background:#1f78d1"></div>
  <div class="a" style="left:738px;top:594px;width:174px;height:2px;background:#1f78d1"></div>
  <div class="t" style="right:74px;top:617px;font-size:11px;color:#777">الخصم</div>
  <svg class="a" style="left:1189px;top:610px" width="18" height="18" viewBox="0 0 18 18"><rect x="0.5" y="0.5" width="11" height="14" rx="1" fill="#dfe6f3" stroke="#6b7fa6" stroke-width="1"/><rect x="2" y="2" width="8" height="3" fill="#8fb0de"/><g fill="#6b7fa6"><rect x="2" y="6.5" width="1.6" height="1.6"/><rect x="5.2" y="6.5" width="1.6" height="1.6"/><rect x="8.4" y="6.5" width="1.6" height="1.6"/><rect x="2" y="9.5" width="1.6" height="1.6"/><rect x="5.2" y="9.5" width="1.6" height="1.6"/><rect x="2" y="12.3" width="1.6" height="1.6"/></g><rect x="7.5" y="10.5" width="5" height="7" rx="2" fill="#e2a528" stroke="#a8700c" stroke-width="0.8"/><rect x="12" y="8.5" width="5" height="9" rx="2" fill="#e2a528" stroke="#a8700c" stroke-width="0.8"/></svg>
  <div class="chev" style="left:1159px;top:614px"></div>
  <div class="ul" style="left:1150px;top:631px;width:65px;height:2px;background:#d0d0d0"></div>
  <div class="chev" style="left:935px;top:614px"></div>
  <div class="ul" style="left:926px;top:631px;width:202px;height:2px;background:#d0d0d0"></div>
  <div class="t" style="right:74px;top:657px;font-size:11px;color:#777">الملاحظات</div>
  <div class="ul" style="left:685px;top:663px;width:529px;height:2px;background:#d0d0d0"></div>

  <!-- ===== STATUS BAR ===== -->
  <div class="a" style="left:2px;top:692px;width:1363px;height:27px;background:#eef1f6;border-radius:8px 0 0 8px"></div>
  <div class="ssep" style="left:117px"></div>
  <div class="ssep" style="left:202px"></div>
  <div class="ssep" style="left:1015px"></div>
  <div class="ssep" style="left:1084px"></div>
  <div class="ssep" style="left:1160px"></div>
  <div class="ssep" style="left:1222px"></div>
  <div class="ssep" style="left:1225px"></div>
  <div class="ssep" style="left:1278px"></div>
  <div class="ssep" style="left:1349px"></div>
  <div class="a" style="left:1350px;top:693px;width:15px;height:26px;border-top:1px solid #dfe2e7;border-right:1px solid #dfe2e7;border-radius:0 6px 0 0"></div>
  <div class="stt" style="right:1258px">لا يوجد مستخدمين</div>
  <div class="stt" style="right:1191px">المستخدم</div>
  <svg class="a" style="left:179px;top:699px" width="14" height="14" viewBox="0 0 14 14"><circle cx="7" cy="4" r="3.3" fill="#1a73d6"/><path d="M0.5 13.5C0.5 9.5 3.5 8.5 7 8.5C10.5 8.5 13.5 9.5 13.5 13.5Z" fill="#1a73d6"/></svg>
  <div class="stt" style="right:360px">الخزينة الرئيسية</div>
  <div class="stt" style="right:310px">الخزينه</div>
  <svg class="a" style="left:1060px;top:698px" width="16" height="16" viewBox="0 0 16 16"><g fill="#2f86e8"><rect x="0.5" y="8" width="3" height="7.5"/><rect x="4.5" y="5" width="3" height="10.5"/><rect x="8.5" y="9" width="3" height="6.5"/><rect x="12.5" y="1" width="3" height="14.5"/></g><path d="M0 10H16M0 12.5H16" stroke="#eef1f6" stroke-width="0.8"/></svg>
  <div class="stt" style="right:215px">الفرع الرئيسي</div>
  <div class="stt" style="right:172px">الفرع</div>
  <div class="a" style="left:1200px;top:700px;width:12px;height:12px;background:#1a73d6;border-radius:2px"></div>
  <svg class="a" style="left:1200px;top:700px" width="12" height="12" viewBox="0 0 12 12"><path d="M2.5 6L5 8.5L9.5 3.5" fill="none" stroke="#fff" stroke-width="1.4"/></svg>
  <div class="stt" style="left:1236px;direction:ltr">Obaida</div>
  <div class="stt" style="right:46px">الشركة</div>
  <svg class="a" style="left:1327px;top:699px" width="13" height="15" viewBox="0 0 13 15"><path d="M6.5 14.5C2.5 10 0.5 7.8 0.5 5.8A6 6 0 0 1 12.5 5.8C12.5 7.8 10.5 10 6.5 14.5Z" fill="#1a73d6"/><circle cx="6.5" cy="5.8" r="2" fill="#fff"/></svg>
</div>
</div>
</body></html>
